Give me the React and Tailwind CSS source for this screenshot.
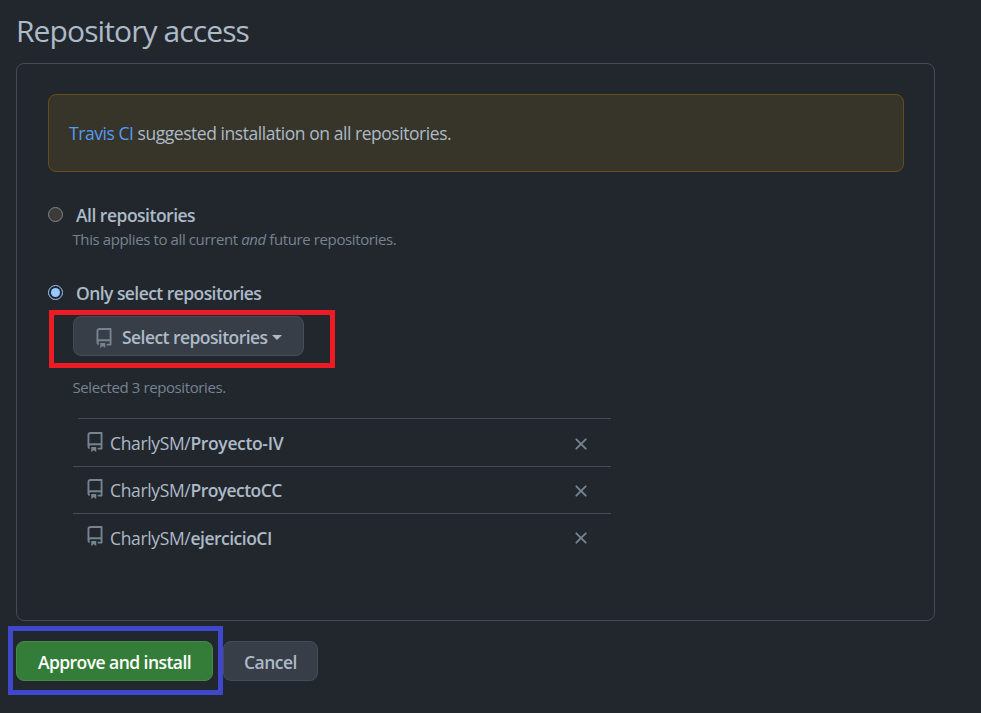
import React from 'react';

function RepoIcon({ className = '' }) {
  return (
    <svg viewBox="0 0 16 16" width="20" height="20" fill="currentColor" className={`shrink-0 text-[#768390] ${className}`}>
      <path fillRule="evenodd" d="M2 2.5A2.5 2.5 0 014.5 0h8.75a.75.75 0 01.75.75v12.5a.75.75 0 01-.75.75h-2.5a.75.75 0 110-1.5h1.75v-2h-8a1 1 0 00-.714 1.7.75.75 0 01-1.072 1.05A2.495 2.495 0 012 11.5v-9zm10.5-1V9h-8c-.356 0-.694.074-1 .208V2.5a1 1 0 011-1h8zM5 12.25v3.25a.25.25 0 00.4.2l1.45-1.087a.25.25 0 01.3 0L8.6 15.7a.25.25 0 00.4-.2v-3.25a.25.25 0 00-.25-.25h-3.5a.25.25 0 00-.25.25z" />
    </svg>
  );
}

function CloseIcon() {
  return (
    <svg viewBox="0 0 16 16" width="20" height="20" fill="currentColor">
      <path fillRule="evenodd" d="M3.72 3.72a.75.75 0 011.06 0L8 6.94l3.22-3.22a.75.75 0 111.06 1.06L9.06 8l3.22 3.22a.75.75 0 11-1.06 1.06L8 9.06l-3.22 3.22a.75.75 0 01-1.06-1.06L6.94 8 3.72 4.78a.75.75 0 010-1.06z" />
    </svg>
  );
}

const repos = [
  { name: 'Proyecto-IV', row: 'h-[48px] border-b pt-px', tracking: 'tracking-[-0.35px]' },
  { name: 'ProyectoCC', row: 'h-[47px] border-b', tracking: 'tracking-[-0.55px]' },
  { name: 'ejercicioCI', row: 'h-[47px]', tracking: 'tracking-[-0.5px]' },
];

function RepoRow({ name, row, tracking }) {
  return (
    <li className={`flex items-center border-[#444c56] ${row}`}>
      <RepoIcon className="ml-[12px] mr-[5px] -mt-[3px]" />
      <span className="grow whitespace-nowrap tracking-[-0.35px]">
        CharlySM/<b className={`font-semibold ${tracking}`}>{name}</b>
      </span>
      <button className="mr-[20px] mt-px text-[#768390]"><CloseIcon /></button>
    </li>
  );
}

export default function App() {
  return (
    <main className="h-[713px] w-[981px] overflow-hidden bg-[#22272e] pl-4 font-['Open_Sans',sans-serif] text-[17.5px] leading-[26px] text-[#adbac7]">
      <h2 className="h-[63px] pt-[9px] text-[30px] leading-[44px] tracking-[-0.9px] whitespace-nowrap">Repository access</h2>

      <section className="h-[558px] w-[919px] rounded-[8px] border border-[#444c56] px-[31px] pt-[30px]">
        <div className="flex h-[78px] w-[856px] items-center rounded-[8px] border border-[#684d1c] bg-[#37342a] pl-[20px] tracking-[-0.45px] whitespace-pre">
          <a className="text-[#539bf5]">Travis CI</a> suggested installation on all repositories.
        </div>

        <label className="mt-[31px] flex h-[24px] items-center">
          <span className="-mt-[1px] size-[15px] rounded-full border border-[#858585] bg-[#3b3b3b]" />
          <b className="ml-[13px] font-semibold whitespace-nowrap tracking-[-0.5px]">All repositories</b>
        </label>
        <p className="ml-[24.5px] h-[24px] text-[15px] leading-[24px] tracking-[-0.39px] whitespace-nowrap text-[#768390]">
          This applies to all current <em>and</em> future repositories.
        </p>

        <label className="mt-[30px] flex h-[24px] items-center">
          <span className="-mt-px flex size-[15px] items-center justify-center rounded-full border border-[#99c8ff] bg-[#22272e]">
            <span className="size-[9px] rounded-full bg-[#99c8ff]" />
          </span>
          <b className="ml-[13px] font-semibold whitespace-nowrap tracking-[-0.56px]">Only select repositories</b>
        </label>

        <div className="ml-px mt-[5px] h-[58px] w-[286px] border-[5px] border-[#ed1c24] pl-[19px]">
          <button className="mt-px flex h-[40px] w-[231px] items-center rounded-[8px] border border-[#444c56] bg-[#373e47] pl-[20px] font-semibold">
            <RepoIcon className="mt-[3px]" />
            <span className="ml-[8px] mt-[2px] whitespace-nowrap tracking-[-0.56px]">Select repositories</span>
            <span className="ml-[5px] mt-[3px] border-x-[5px] border-t-[5px] border-x-transparent border-t-[#adbac7]" />
          </button>
        </div>

        <p className="ml-[24.5px] mt-[7px] h-[24px] text-[15px] leading-[24px] tracking-[-0.4px] whitespace-nowrap text-[#768390]">
          Selected 3 repositories.
        </p>

        <div className="ml-[25px] mt-[19px] w-[538px]">
          <div className="ml-[5px] h-px bg-[#444c56]" />
          <ul>
            {repos.map((repo) => <RepoRow key={repo.name} {...repo} />)}
          </ul>
        </div>
      </section>

      <div className="-ml-2 mt-[5px] flex">
        <div className="h-[69px] w-[215px] border-[5px] border-[#3f48cc] pl-[3px] pt-[10px]">
          <button className="h-[40px] w-[197px] rounded-[8px] border border-[#46894a] bg-[#347d39] pt-[2px] font-semibold whitespace-nowrap tracking-[-0.55px] text-white">
            Approve and install
          </button>
        </div>
        <button className="mt-[15px] h-[40px] w-[95px] rounded-[8px] border border-[#444c56] bg-[#373e47] pt-[2px] font-semibold tracking-[-0.5px]">Cancel</button>
      </div>
    </main>
  );
}
